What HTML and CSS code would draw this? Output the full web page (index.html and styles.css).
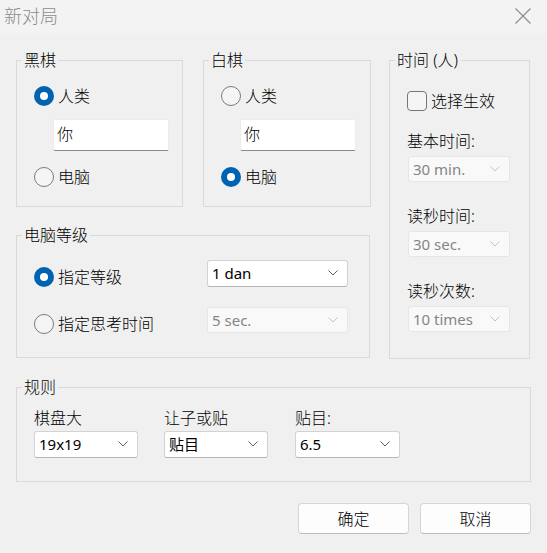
FILE: index.html
```html
<!DOCTYPE html>
<html lang="zh-CN">
<head>
<meta charset="utf-8">
<title>新对局</title>
<link rel="stylesheet" href="styles.css">
</head>
<body>
<div class="window">
  <div class="titlebar">
    <span class="title">新对局</span>
    <svg class="close" width="16" height="16" viewBox="0 0 16 16"><path d="M0.5 0.5 L15.5 15.5 M15.5 0.5 L0.5 15.5" stroke="#8a8a8a" stroke-width="1.1" fill="none"/></svg>
  </div>
  <div class="main">
    <div class="top">
      <div class="left">
        <div class="players">
          <fieldset class="group black">
            <legend>黑棋</legend>
            <div class="player-body">
              <div class="radio-row"><span class="radio checked"></span><span>人类</span></div>
              <div class="textfield">你</div>
              <div class="radio-row"><span class="radio"></span><span>电脑</span></div>
            </div>
          </fieldset>
          <fieldset class="group white">
            <legend>白棋</legend>
            <div class="player-body">
              <div class="radio-row"><span class="radio"></span><span>人类</span></div>
              <div class="textfield">你</div>
              <div class="radio-row"><span class="radio checked"></span><span>电脑</span></div>
            </div>
          </fieldset>
        </div>
        <fieldset class="group level">
          <legend>电脑等级</legend>
          <div class="level-body">
            <div class="radio-row"><span class="radio checked"></span><span>指定等级</span></div>
            <div class="combo"><span>1 dan</span><svg class="chev" width="10" height="6" viewBox="0 0 10 6"><polyline points="0.5,0.5 5,5 9.5,0.5" fill="none" stroke="#5f5f5f" stroke-width="1"/></svg></div>
            <div class="radio-row"><span class="radio"></span><span>指定思考时间</span></div>
            <div class="combo disabled"><span>5 sec.</span><svg class="chev" width="10" height="6" viewBox="0 0 10 6"><polyline points="0.5,0.5 5,5 9.5,0.5" fill="none" stroke="#c2c2c2" stroke-width="1"/></svg></div>
          </div>
        </fieldset>
      </div>
      <fieldset class="group time">
        <legend>时间 (人)</legend>
        <div class="time-body">
          <div class="check-row"><span class="checkbox"></span><span>选择生效</span></div>
          <div class="field-label first">基本时间:</div>
          <div class="combo disabled narrow"><span>30 min.</span><svg class="chev" width="10" height="6" viewBox="0 0 10 6"><polyline points="0.5,0.5 5,5 9.5,0.5" fill="none" stroke="#c2c2c2" stroke-width="1"/></svg></div>
          <div class="field-label">读秒时间:</div>
          <div class="combo disabled narrow"><span>30 sec.</span><svg class="chev" width="10" height="6" viewBox="0 0 10 6"><polyline points="0.5,0.5 5,5 9.5,0.5" fill="none" stroke="#c2c2c2" stroke-width="1"/></svg></div>
          <div class="field-label">读秒次数:</div>
          <div class="combo disabled narrow"><span>10 times</span><svg class="chev" width="10" height="6" viewBox="0 0 10 6"><polyline points="0.5,0.5 5,5 9.5,0.5" fill="none" stroke="#c2c2c2" stroke-width="1"/></svg></div>
        </div>
      </fieldset>
    </div>
    <fieldset class="group rules">
      <legend>规则</legend>
      <div class="rules-body">
        <div class="rule-col">
          <div class="field-label">棋盘大</div>
          <div class="combo small"><span>19x19</span><svg class="chev" width="10" height="6" viewBox="0 0 10 6"><polyline points="0.5,0.5 5,5 9.5,0.5" fill="none" stroke="#5f5f5f" stroke-width="1"/></svg></div>
        </div>
        <div class="rule-col">
          <div class="field-label">让子或贴</div>
          <div class="combo small"><span>贴目</span><svg class="chev" width="10" height="6" viewBox="0 0 10 6"><polyline points="0.5,0.5 5,5 9.5,0.5" fill="none" stroke="#5f5f5f" stroke-width="1"/></svg></div>
        </div>
        <div class="rule-col">
          <div class="field-label">贴目:</div>
          <div class="combo small wide"><span>6.5</span><svg class="chev" width="10" height="6" viewBox="0 0 10 6"><polyline points="0.5,0.5 5,5 9.5,0.5" fill="none" stroke="#5f5f5f" stroke-width="1"/></svg></div>
        </div>
      </div>
    </fieldset>
    <div class="buttons">
      <button class="btn">确定</button>
      <button class="btn">取消</button>
    </div>
  </div>
</div>
</body>
</html>
```

FILE: styles.css
```css
* { box-sizing: border-box; }
html, body { margin: 0; padding: 0; }
body {
  font-family: "Noto Sans", "Noto Sans CJK SC", sans-serif;
  font-size: 16px;
  font-weight: 300;
  color: #000;
  background: #f0f0f0;
}
.window {
  width: 547px;
  height: 553px;
  background: #f0f0f0;
  overflow: hidden;
}
.titlebar {
  height: 33px;
  background: #f3f3f3;
  display: flex;
  align-items: center;
  justify-content: space-between;
  padding: 0 16px 2px 4px;
}
.title {
  font-size: 18px;
  line-height: 22px;
  color: #8c8c8c;
}
.close { display: block; margin-top: 1px; }
.main {
  padding: 17px 16px 0 16px;
}
.top {
  display: flex;
  gap: 18px;
  align-items: flex-start;
}
.left { width: 355px; }
.players { display: flex; gap: 20px; }
.group {
  margin: 0;
  padding: 0;
  border: 1px solid #dadada;
  min-width: 0;
}
.group legend {
  margin-left: 5px;
  padding: 0 2px;
  line-height: 20px;
  height: 20px;
  font-size: 16px;
}
.black { width: 167px; }
.white { width: 168px; }
.player-body {
  height: 136px;
  padding: 16px 0 0 17px;
}
.radio-row {
  display: flex;
  align-items: center;
  gap: 4px;
  height: 20px;
  line-height: 20px;
  white-space: nowrap;
}
.radio {
  width: 20px;
  height: 20px;
  border-radius: 50%;
  border: 1px solid #7a7a7a;
  background: #f5f5f5;
  flex: none;
  display: flex;
  align-items: center;
  justify-content: center;
}
.radio.checked {
  border: none;
  background: #0063b1;
}
.radio.checked::after {
  content: "";
  width: 8px;
  height: 8px;
  border-radius: 50%;
  background: #fff;
}
.textfield {
  width: 116px;
  height: 32px;
  margin: 13px 0 16px 19px;
  background: #fff;
  border: 1px solid #ececec;
  border-bottom: 1px solid #8a8a8a;
  border-radius: 2px;
  padding: 0 0 0 3px;
  line-height: 29px;
}
.level { width: 354px; margin-top: 18px; }
.level-body {
  height: 112px;
  padding: 15px 0 0 17px;
  display: grid;
  grid-template-columns: 173px 141px;
  grid-template-rows: 27px 27px;
  row-gap: 20px;
}
.level-body .radio-row { margin-top: 7px; }
.combo {
  height: 27px;
  background: #fff;
  border: 1px solid #d3d3d3;
  border-bottom-color: #b5b5b5;
  border-radius: 3px;
  display: flex;
  align-items: center;
  justify-content: space-between;
  padding: 0 9px 1px 4px;
  font-size: 15px;
  font-weight: 400;
  line-height: 20px;
  white-space: nowrap;
}
.combo.disabled {
  background: #f9f9f9;
  border-color: #e6e6e6;
  color: #858585;
  height: 26px;
}
.chev { display: block; flex: none; }
.time { width: 141px; }
.time-body {
  height: 288px;
  padding: 21px 0 0 17px;
}
.check-row {
  display: flex;
  align-items: center;
  gap: 4px;
  height: 20px;
  line-height: 20px;
  white-space: nowrap;
}
.checkbox {
  width: 20px;
  height: 20px;
  border: 1px solid #767676;
  border-radius: 4px;
  background: #f5f5f5;
  flex: none;
}
.field-label {
  line-height: 20px;
  height: 20px;
  white-space: nowrap;
}
.time-body .field-label { margin-top: 24px; }
.time-body .field-label.first { margin-top: 20px; }
.combo.narrow {
  width: 102px;
  margin: 5px 0 0 1px;
}
.rules { width: 515px; margin-top: 18px; }
.rules-body {
  height: 84px;
  padding: 11px 0 0 17px;
  display: grid;
  grid-template-columns: 130px 131px 105px;
}
.combo.small { width: 104px; margin-top: 3px; }
.combo.small.wide { width: 105px; }
.buttons {
  display: flex;
  justify-content: flex-end;
  gap: 11px;
  margin-top: 21px;
}
.btn {
  width: 111px;
  height: 31px;
  background: #fdfdfd;
  border: 1px solid #d5d5d5;
  border-bottom-color: #bdbdbd;
  border-radius: 4px;
  font-family: "Noto Sans", "Noto Sans CJK SC", sans-serif;
  font-size: 16px;
  font-weight: 300;
  color: #000;
  padding: 0;
  line-height: 20px;
}
```
